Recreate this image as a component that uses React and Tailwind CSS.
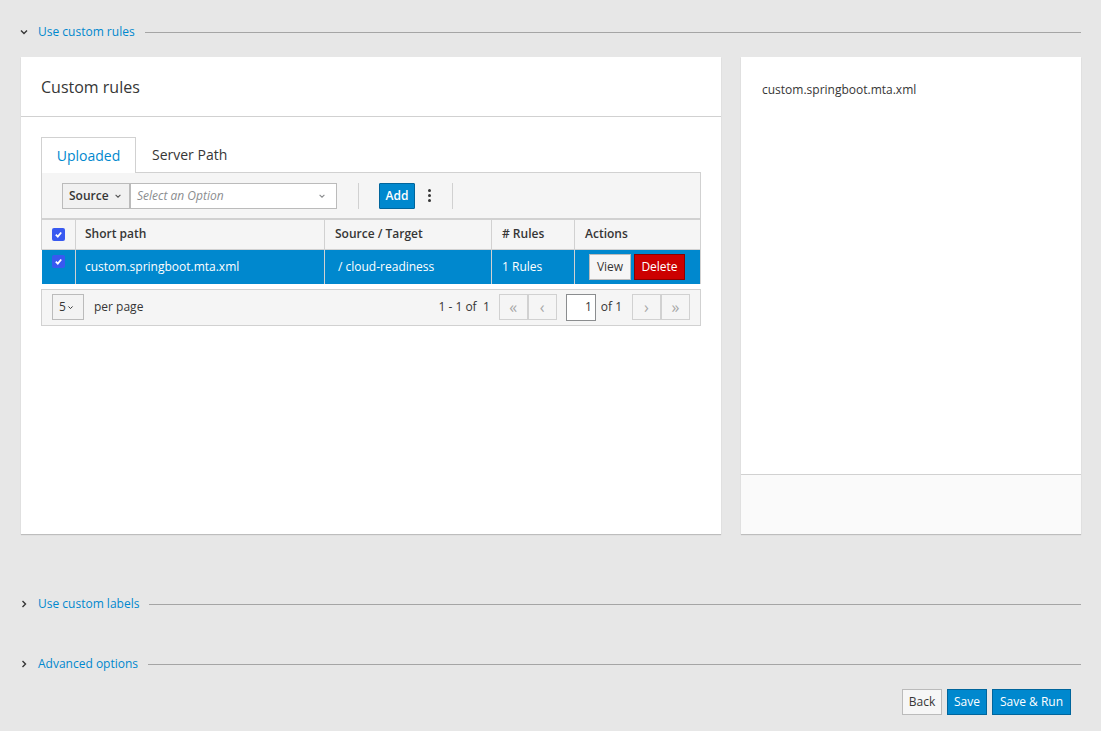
import React from "react";

const Chevron = ({ dir = "down", className = "" }) => (
  <svg viewBox="0 0 10 10" className={className} fill="none" stroke="currentColor" strokeWidth="1.4">
    {dir === "down" ? <path d="M2 3.5 L5 6.5 L8 3.5" /> : <path d="M3.5 2 L6.5 5 L3.5 8" />}
  </svg>
);

const Section = ({ open, label }) => (
  <div className="flex items-center h-[20px]">
    <Chevron dir={open ? "down" : "right"} className="w-[10px] h-[10px] text-[#363636] ml-[19px]" />
    <span className="ml-[9px] text-[12px] text-[#0088ce]">{label}</span>
    <div className="flex-1 ml-[10px] border-t border-[#a5a5a5]"></div>
  </div>
);

const Check = () => (
  <span className="w-[13px] h-[13px] rounded-[2px] bg-[#3859f0] flex items-center justify-center">
    <svg viewBox="0 0 10 10" className="w-[9px] h-[9px]" fill="none" stroke="white" strokeWidth="2">
      <path d="M2 5.2 L4.2 7.3 L8 2.8" />
    </svg>
  </span>
);

const PageBtn = ({ children }) => (
  <span className="w-[29px] h-[26px] flex items-center justify-center border border-[#d1d1d1] bg-[#f5f5f5] text-[#a8a8a8] text-[16px] leading-none">
    {children}
  </span>
);

const App = () => {
  return (
    <div
      className="w-[1101px] h-[731px] bg-[#e7e7e7] text-[#363636] overflow-hidden"
      style={{ fontFamily: '"Open Sans", "Liberation Sans", sans-serif' }}
    >
      <div className="pt-[22px] pr-[20px]">
        <Section open label="Use custom rules" />
      </div>

      <div className="flex gap-[20px] mt-[15px] ml-[21px] mr-[20px] h-[477px]">
        <div className="w-[700px] bg-white shadow-[0_1px_1px_rgba(0,0,0,0.18)] flex flex-col">
          <div className="h-[60px] border-b border-[#d1d1d1] flex items-center pl-[20px] text-[16px] text-[#363636]">
            Custom rules
          </div>
          <div className="px-[20px] pt-[20px]">
            <div className="flex h-[35px] items-end">
              <div className="h-[36px] w-[95px] border border-[#d1d1d1] border-b-0 bg-white flex items-center justify-center text-[14px] text-[#0088ce] relative top-[1px]">
                Uploaded
              </div>
              <div className="h-[35px] flex items-center px-[16px] text-[14px] text-[#363636]">Server Path</div>
            </div>
            <div className="border border-[#d1d1d1] bg-[#f5f5f5] h-[47px] flex items-center pl-[20px]">
              <div className="h-[26px] w-[68px] border border-[#bbb] bg-[#f1f1f1] flex items-center pl-[6px] text-[12px] font-semibold text-[#363636]">
                Source
                <Chevron className="w-[8px] h-[8px] ml-[5px] text-[#555]" />
              </div>
              <div className="h-[26px] w-[207px] border border-[#bbb] bg-white flex items-center pl-[6px] pr-[10px] text-[12px] italic text-[#8b8d8f]">
                <span className="flex-1">Select an Option</span>
                <Chevron className="w-[8px] h-[8px] text-[#8b8d8f]" />
              </div>
              <div className="ml-[21px] h-[26px] border-l border-[#d1d1d1]"></div>
              <div className="ml-[20px] h-[26px] w-[36px] rounded-[1px] bg-[#0088ce] border border-[#00659c] text-white text-[12px] font-semibold flex items-center justify-center">
                Add
              </div>
              <div className="ml-[13px] w-[3px] flex flex-col gap-[2px]">
                <span className="w-[3px] h-[3px] bg-[#363636] rounded-full"></span>
                <span className="w-[3px] h-[3px] bg-[#363636] rounded-full"></span>
                <span className="w-[3px] h-[3px] bg-[#363636] rounded-full"></span>
              </div>
              <div className="ml-[21px] h-[26px] border-l border-[#d1d1d1]"></div>
            </div>
            <table className="w-[660px] border-collapse text-[12px]">
              <thead>
                <tr className="h-[30px] bg-[#f5f5f5] text-[#363636] font-semibold">
                  <th className="w-[34px] border border-[#d1d1d1] font-normal">
                    <div className="flex justify-center"><Check /></div>
                  </th>
                  <th className="w-[249px] border border-[#d1d1d1] text-left pl-[9px] pb-[2px] font-semibold">Short path</th>
                  <th className="w-[167px] border border-[#d1d1d1] text-left pl-[10px] pb-[2px] font-semibold">Source / Target</th>
                  <th className="w-[83px] border border-[#d1d1d1] text-left pl-[10px] pb-[2px] font-semibold">
                    # Rules
                  </th>
                  <th className="border border-[#d1d1d1] text-left pl-[10px] pb-[2px] font-semibold">Actions</th>
                </tr>
              </thead>
              <tbody>
                <tr className="h-[34px] bg-[#0088ce] text-white">
                  <td className="border-r border-[#d1d1d1] align-top pt-[5px]">
                    <div className="flex justify-center"><Check /></div>
                  </td>
                  <td className="border-r border-[#d1d1d1] pl-[9px]">custom.springboot.mta.xml</td>
                  <td className="border-r border-[#d1d1d1] pl-[13px]">/ cloud-readiness</td>
                  <td className="border-r border-[#d1d1d1] pl-[10px]">1 Rules</td>
                  <td className="border-r border-[#d1d1d1] pl-[14px]">
                    <div className="flex gap-[3px]">
                      <span className="h-[26px] w-[42px] bg-[#f6f6f6] border border-[#bbb] text-[#363636] flex items-center justify-center">View</span>
                      <span className="h-[26px] w-[51px] bg-[#cc0000] border border-[#8b0000] text-white flex items-center justify-center">Delete</span>
                    </div>
                  </td>
                </tr>
              </tbody>
            </table>
            <div className="mt-[5px] h-[37px] border border-[#d1d1d1] bg-[#f5f5f5] flex items-center pl-[10px] pr-[10px] text-[12px] text-[#363636]">
              <div className="h-[26px] w-[32px] border border-[#bbb] bg-[#f3f3f3] flex items-center pl-[6px] text-[12px]">
                5<Chevron className="w-[7px] h-[7px] ml-[1px]" />
              </div>
              <span className="ml-[10px]">per page</span>
              <span className="ml-auto mr-[9px]">1 - 1 of &nbsp;1</span>
              <div className="flex">
                <PageBtn>«</PageBtn>
                <PageBtn>‹</PageBtn>
              </div>
              <div className="ml-[9px] h-[27px] w-[30px] border border-[#8b8d8f] bg-white flex items-center justify-end pr-[3px]">1</div>
              <span className="ml-[5px] mr-[10px]">of 1</span>
              <div className="flex">
                <PageBtn>›</PageBtn>
                <PageBtn>»</PageBtn>
              </div>
            </div>
          </div>
        </div>

        <div className="flex-1 bg-white shadow-[0_1px_1px_rgba(0,0,0,0.18)] flex flex-col">
          <div className="flex-1 pl-[21px] pt-[24px] text-[12px] text-[#363636]">custom.springboot.mta.xml</div>
          <div className="h-[60px] border-t border-[#d1d1d1] bg-[#fafafa]"></div>
        </div>
      </div>

      <div className="mt-[60px] pr-[20px]">
        <Section label="Use custom labels" />
      </div>
      <div className="mt-[40px] pr-[20px]">
        <Section label="Advanced options" />
      </div>

      <div className="flex justify-end gap-[5px] mr-[30px] mt-[15px]">
        <span className="h-[26px] w-[40px] bg-[#f6f6f6] border border-[#bbb] text-[12px] text-[#363636] flex items-center justify-center">Back</span>
        <span className="h-[26px] w-[40px] bg-[#0088ce] border border-[#00659c] text-[12px] text-white flex items-center justify-center">Save</span>
        <span className="h-[26px] w-[79px] bg-[#0088ce] border border-[#00659c] text-[12px] text-white flex items-center justify-center">Save &amp; Run</span>
      </div>
    </div>
  );
};

export default App;
